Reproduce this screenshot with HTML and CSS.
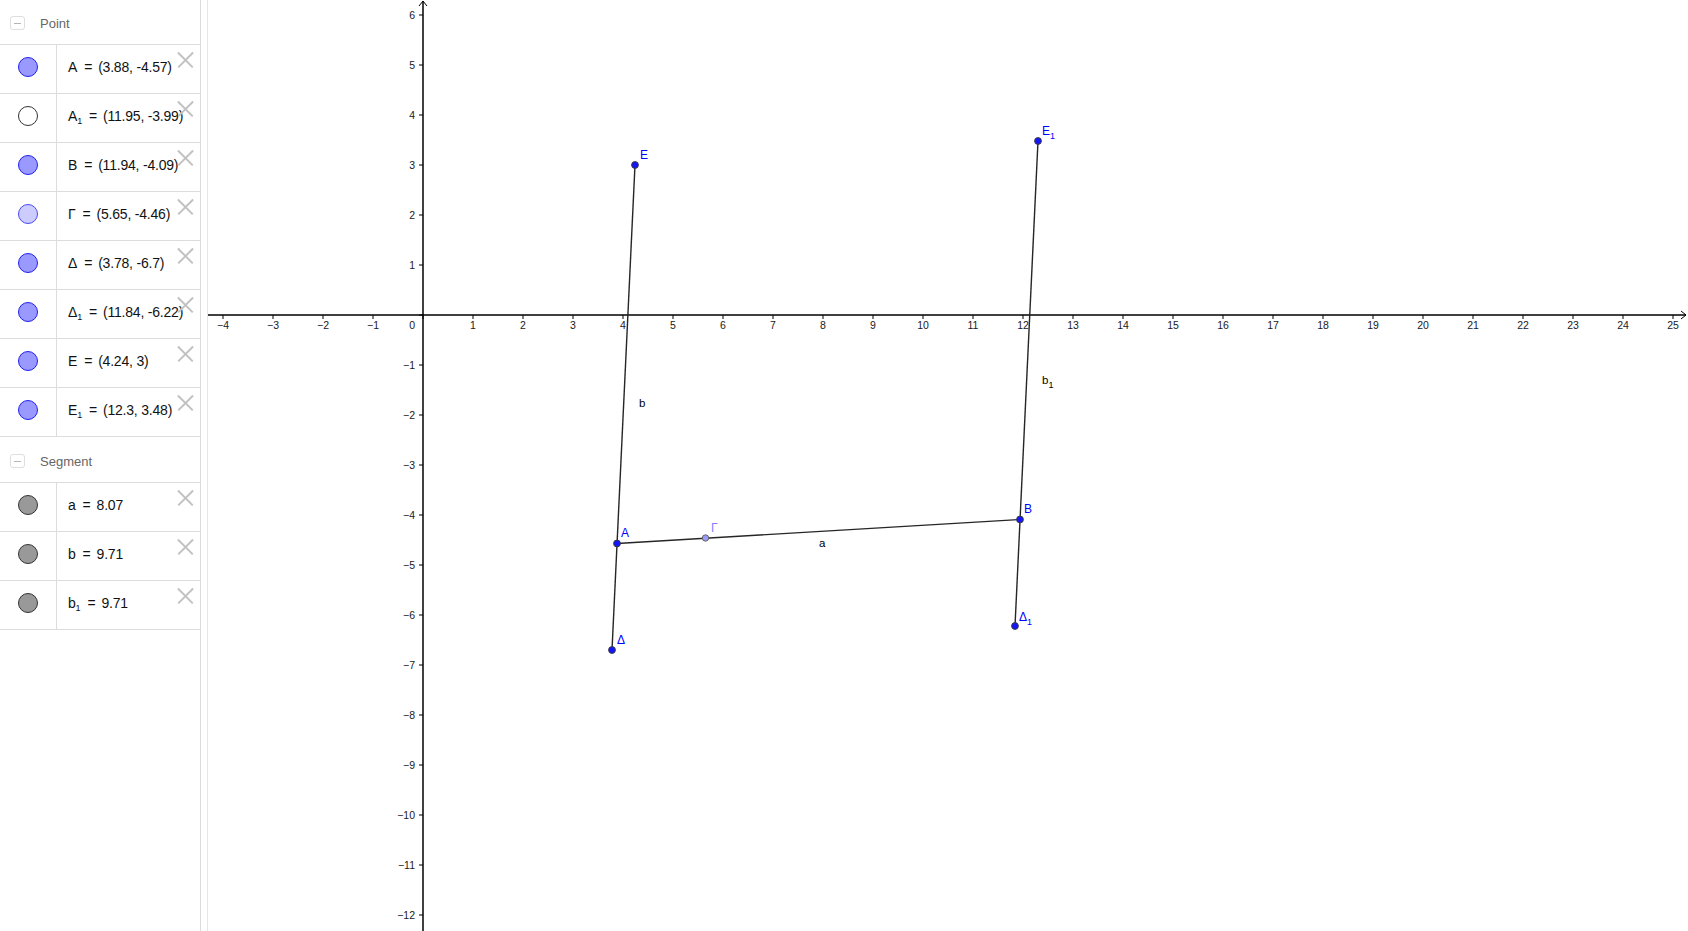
FILE: index.html
```html
<!DOCTYPE html>
<html lang="en">
<head>
<meta charset="utf-8">
<title>Graphing</title>
<link rel="stylesheet" href="styles.css">
</head>
<body>
<div class="app">
  <aside class="algebra">
    <div class="group-head"><span class="toggle"></span><span class="group-title">Point</span></div>
    <div class="item"><div class="marker"><span class="dot dot-blue"></span></div><div class="def">A<span class="eq">=</span>(3.88, -4.57)</div><span class="close"></span></div>
    <div class="item"><div class="marker"><span class="dot dot-hidden"></span></div><div class="def">A<span class="sub">1</span><span class="eq">=</span>(11.95, -3.99)</div><span class="close"></span></div>
    <div class="item"><div class="marker"><span class="dot dot-blue"></span></div><div class="def">B<span class="eq">=</span>(11.94, -4.09)</div><span class="close"></span></div>
    <div class="item"><div class="marker"><span class="dot dot-light"></span></div><div class="def">Γ<span class="eq">=</span>(5.65, -4.46)</div><span class="close"></span></div>
    <div class="item"><div class="marker"><span class="dot dot-blue"></span></div><div class="def">Δ<span class="eq">=</span>(3.78, -6.7)</div><span class="close"></span></div>
    <div class="item"><div class="marker"><span class="dot dot-blue"></span></div><div class="def">Δ<span class="sub">1</span><span class="eq">=</span>(11.84, -6.22)</div><span class="close"></span></div>
    <div class="item"><div class="marker"><span class="dot dot-blue"></span></div><div class="def">E<span class="eq">=</span>(4.24, 3)</div><span class="close"></span></div>
    <div class="item"><div class="marker"><span class="dot dot-blue"></span></div><div class="def">E<span class="sub">1</span><span class="eq">=</span>(12.3, 3.48)</div><span class="close"></span></div>
    <div class="group-head group-head-second"><span class="toggle"></span><span class="group-title">Segment</span></div>
    <div class="item"><div class="marker"><span class="dot dot-gray"></span></div><div class="def">a<span class="eq">=</span>8.07</div><span class="close"></span></div>
    <div class="item"><div class="marker"><span class="dot dot-gray"></span></div><div class="def">b<span class="eq">=</span>9.71</div><span class="close"></span></div>
    <div class="item"><div class="marker"><span class="dot dot-gray"></span></div><div class="def">b<span class="sub">1</span><span class="eq">=</span>9.71</div><span class="close"></span></div>
  </aside>
  <div class="splitter"></div>
  <main class="graphics">
    <svg class="canvas" width="1480" height="931" viewBox="0 0 1480 931" xmlns="http://www.w3.org/2000/svg">
      <g class="axis">
        <line x1="0" y1="315" x2="1478" y2="315"/>
        <polyline class="arrow" points="1473,311 1478,315 1473,319"/>
        <line x1="215" y1="1" x2="215" y2="931"/>
        <polyline class="arrow" points="211,6 215,1 219,6"/>
        <line class="ticks" x1="14.5" y1="317" x2="1470" y2="317"/>
        <line class="ticks" x1="213" y1="14.5" x2="213" y2="920"/>
      </g>
      <g class="tick-x">
        <text x="15" y="329">−4</text>
        <text x="65" y="329">−3</text>
        <text x="115" y="329">−2</text>
        <text x="165" y="329">−1</text>
        <text x="265" y="329">1</text>
        <text x="315" y="329">2</text>
        <text x="365" y="329">3</text>
        <text x="415" y="329">4</text>
        <text x="465" y="329">5</text>
        <text x="515" y="329">6</text>
        <text x="565" y="329">7</text>
        <text x="615" y="329">8</text>
        <text x="665" y="329">9</text>
        <text x="715" y="329">10</text>
        <text x="765" y="329">11</text>
        <text x="815" y="329">12</text>
        <text x="865" y="329">13</text>
        <text x="915" y="329">14</text>
        <text x="965" y="329">15</text>
        <text x="1015" y="329">16</text>
        <text x="1065" y="329">17</text>
        <text x="1115" y="329">18</text>
        <text x="1165" y="329">19</text>
        <text x="1215" y="329">20</text>
        <text x="1265" y="329">21</text>
        <text x="1315" y="329">22</text>
        <text x="1365" y="329">23</text>
        <text x="1415" y="329">24</text>
        <text x="1465" y="329">25</text>
      </g>
      <g class="tick-y">
        <text x="207" y="329">0</text>
        <text x="207" y="19">6</text>
        <text x="207" y="69">5</text>
        <text x="207" y="119">4</text>
        <text x="207" y="169">3</text>
        <text x="207" y="219">2</text>
        <text x="207" y="269">1</text>
        <text x="207" y="369">−1</text>
        <text x="207" y="419">−2</text>
        <text x="207" y="469">−3</text>
        <text x="207" y="519">−4</text>
        <text x="207" y="569">−5</text>
        <text x="207" y="619">−6</text>
        <text x="207" y="669">−7</text>
        <text x="207" y="719">−8</text>
        <text x="207" y="769">−9</text>
        <text x="207" y="819">−10</text>
        <text x="207" y="869">−11</text>
        <text x="207" y="919">−12</text>
      </g>
      <g class="segments">
        <line x1="409" y1="543.5" x2="812" y2="519.5"/>
        <line x1="427" y1="165" x2="404" y2="650"/>
        <line x1="830" y1="141" x2="807" y2="626"/>
      </g>
      <g class="seg-labels">
        <text x="431" y="407">b</text>
        <text x="834" y="384">b<tspan class="lsub" dy="4">1</tspan></text>
        <text x="611" y="547">a</text>
      </g>
      <g class="points">
        <circle cx="409" cy="543.5" r="3.4"/>
        <circle cx="812" cy="519.5" r="3.4"/>
        <circle cx="404" cy="650" r="3.4"/>
        <circle cx="807" cy="626" r="3.4"/>
        <circle cx="427" cy="165" r="3.4"/>
        <circle cx="830" cy="141" r="3.4"/>
        <circle class="pt-light" cx="497.5" cy="538" r="3.2"/>
      </g>
      <g class="pt-labels">
        <text x="432" y="159">E</text>
        <text x="834" y="135">E<tspan class="lsub" dy="4">1</tspan></text>
        <text x="413" y="537">A</text>
        <text x="816" y="513">B</text>
        <text x="409" y="644">Δ</text>
        <text x="811" y="621">Δ<tspan class="lsub" dy="4">1</tspan></text>
        <text class="lbl-light" x="503" y="532">Γ</text>
      </g>
    </svg>
  </main>
</div>
</body>
</html>
```

FILE: styles.css
```css
* {
  box-sizing: border-box;
}

html,
body {
  margin: 0;
  padding: 0;
  background: #ffffff;
}

body {
  font-family: "Liberation Sans", Arial, sans-serif;
  overflow: hidden;
}

.app {
  display: flex;
  width: 1688px;
  height: 931px;
}

/* Algebra panel */
.algebra {
  flex: none;
  width: 201px;
  border-right: 1px solid #dcdcdc;
}

.group-head {
  display: flex;
  align-items: center;
  height: 45px;
  padding: 2px 0 0 10px;
  border-bottom: 1px solid #dcdcdc;
}

.group-head-second {
  height: 46px;
  padding-top: 3px;
}

.toggle {
  position: relative;
  flex: none;
  width: 15px;
  height: 14px;
  border: 1px solid #dedede;
  border-radius: 3px;
}

.toggle::after {
  content: "";
  position: absolute;
  left: 3px;
  top: 6px;
  width: 7px;
  height: 1px;
  background: #b5b5b5;
}

.group-title {
  margin-left: 15px;
  font-size: 13px;
  color: #666666;
}

.item {
  position: relative;
  display: flex;
  height: 49px;
  border-bottom: 1px solid #dcdcdc;
}

.marker {
  flex: none;
  display: flex;
  justify-content: center;
  align-items: flex-start;
  width: 57px;
  padding-top: 12px;
  border-right: 1px solid #dcdcdc;
}

.dot {
  display: block;
  width: 20px;
  height: 20px;
  border-radius: 50%;
  border: 1px solid #1a1aff;
}

.dot-blue {
  background: #9999ff;
  border-color: #2020f0;
}

.dot-light {
  background: #ccccff;
  border-color: #4a4af0;
}

.dot-hidden {
  background: #ffffff;
  border-color: #333333;
}

.dot-gray {
  background: #999999;
  border-color: #333333;
}

.def {
  padding: 12px 0 0 11px;
  font-size: 14px;
  line-height: 20px;
  letter-spacing: -0.2px;
  color: #111111;
  white-space: nowrap;
}

.eq {
  margin: 0 6px 0 7px;
}

.sub {
  font-size: 9px;
  vertical-align: -3px;
  line-height: 0;
}

.close {
  position: absolute;
  top: 7px;
  right: 7px;
  width: 15px;
  height: 15px;
}

.close::before,
.close::after {
  content: "";
  position: absolute;
  left: -3px;
  top: 7px;
  width: 21px;
  height: 1.5px;
  background: #c2c2c2;
  transform: rotate(45deg);
}

.close::after {
  transform: rotate(-45deg);
}

/* splitter between views */
.splitter {
  flex: none;
  width: 7px;
  border-right: 1px solid #e6e6e6;
}

/* Graphics view */
.graphics {
  flex: 1;
  overflow: hidden;
}

.canvas {
  display: block;
}

.axis line {
  stroke: #000000;
  stroke-width: 1.5;
}

.axis .arrow {
  fill: none;
  stroke: #000000;
  stroke-width: 1;
}

.axis .ticks {
  stroke-width: 4;
  stroke-dasharray: 1 49;
}

.tick-x text,
.tick-y text {
  font-family: "Liberation Sans", Arial, sans-serif;
  font-size: 10.5px;
  fill: #1a1a1a;
}

.tick-x text {
  text-anchor: middle;
}

.tick-y text {
  text-anchor: end;
}

.segments line {
  stroke: #262626;
  stroke-width: 1.4;
}

.seg-labels text {
  font-family: "Liberation Sans", Arial, sans-serif;
  font-size: 11.5px;
  fill: #000000;
}

.points circle {
  fill: #1414ff;
  stroke: #3c3c3c;
  stroke-width: 1;
}

.points .pt-light {
  fill: #9a9aff;
  stroke: #666666;
}

.pt-labels text {
  font-family: "Liberation Sans", Arial, sans-serif;
  font-size: 12px;
  fill: #0000ff;
}

.pt-labels .lbl-light {
  fill: #8080ff;
}

.lsub {
  font-size: 9px;
}
```
